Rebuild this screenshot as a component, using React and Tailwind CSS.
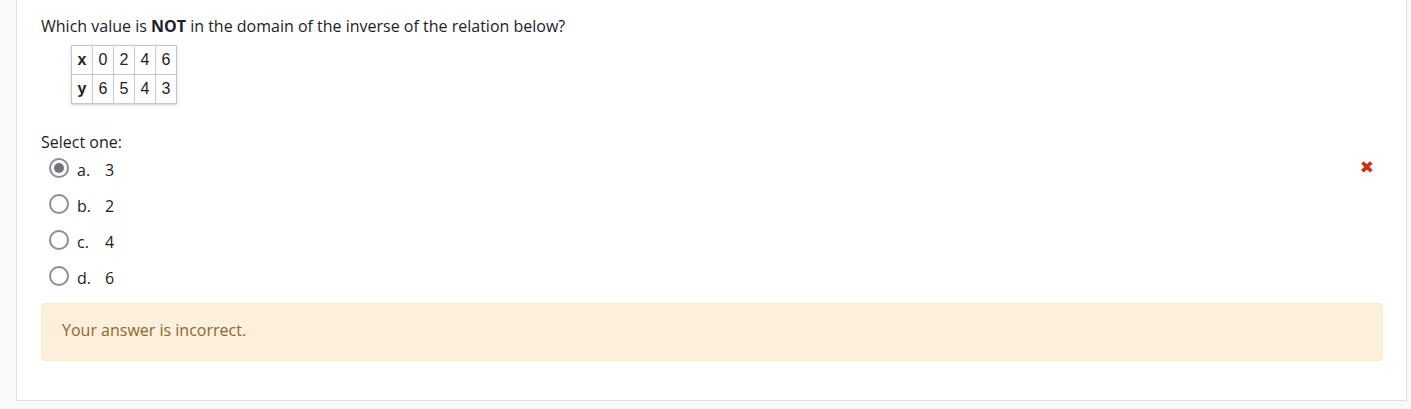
const OPTIONS = [
  { letter: 'a.', value: '3', checked: true },
  { letter: 'b.', value: '2' },
  { letter: 'c.', value: '4' },
  { letter: 'd.', value: '6' },
]

const ROWS = [
  ['x', '0', '2', '4', '6'],
  ['y', '6', '5', '4', '3'],
]

function Radio({ checked }) {
  return (
    <span className="w-[20px] h-[20px] rounded-full border-2 border-[#8a8d91] bg-white flex items-center justify-center shrink-0">
      {checked && <span className="w-[10px] h-[10px] rounded-full bg-[#6f747a]" />}
    </span>
  )
}

export default function App() {
  return (
    <div className="w-[1411px] h-[409px] bg-[#f8f9fa] pl-[16px] pr-[4px] font-['Open_Sans',sans-serif] text-[#1d2125] overflow-hidden">
      <div className="h-[401px] bg-white border-x border-b border-[#dee2e6] pl-[24px] pr-[23px] pt-[14px] relative">
        <p className="text-[16px] leading-[24px]">
          Which value is <b className="font-bold">NOT</b> in the domain of the inverse of the relation below?
        </p>
        <table className="ml-[30px] mt-[7px] border-collapse shadow-[0_1px_3px_rgba(0,0,0,0.2)] font-['Liberation_Sans',sans-serif] text-[16px] text-[#222]">
          <tbody>
            {ROWS.map((row, i) => (
              <tr key={i}>
                {row.map((c, j) => (
                  <td
                    key={j}
                    className={`border border-[#c8c8c8] h-[29px] w-[21px] text-center ${j === 0 ? 'font-bold' : ''}`}
                  >
                    {c}
                  </td>
                ))}
              </tr>
            ))}
          </tbody>
        </table>

        <p className="mt-[26px] text-[16px] leading-[24px]">Select one:</p>
        <div className="flex flex-col mt-[-4px]">
          {OPTIONS.map((o) => (
            <div key={o.letter} className="h-[36px] flex items-center pl-[8px]">
              <Radio checked={o.checked} />
              <span className="ml-[8px] text-[16px] w-[28px] pt-[3px]">{o.letter}</span>
              <span className="text-[16px] pt-[3px]">{o.value}</span>
            </div>
          ))}
        </div>

        <span className="absolute right-[32px] top-[159px] text-[#ca3120] text-[17px] font-bold leading-none font-['DejaVu_Sans',sans-serif]">✖</span>

        <div className="mt-[9px] h-[58px] bg-[#fcefdc] border border-[#fbe8cd] rounded-[4px] pl-[20px] pb-[5px] flex items-center text-[16px] text-[#8e662e]">
          Your answer is incorrect.
        </div>
      </div>
    </div>
  )
}
